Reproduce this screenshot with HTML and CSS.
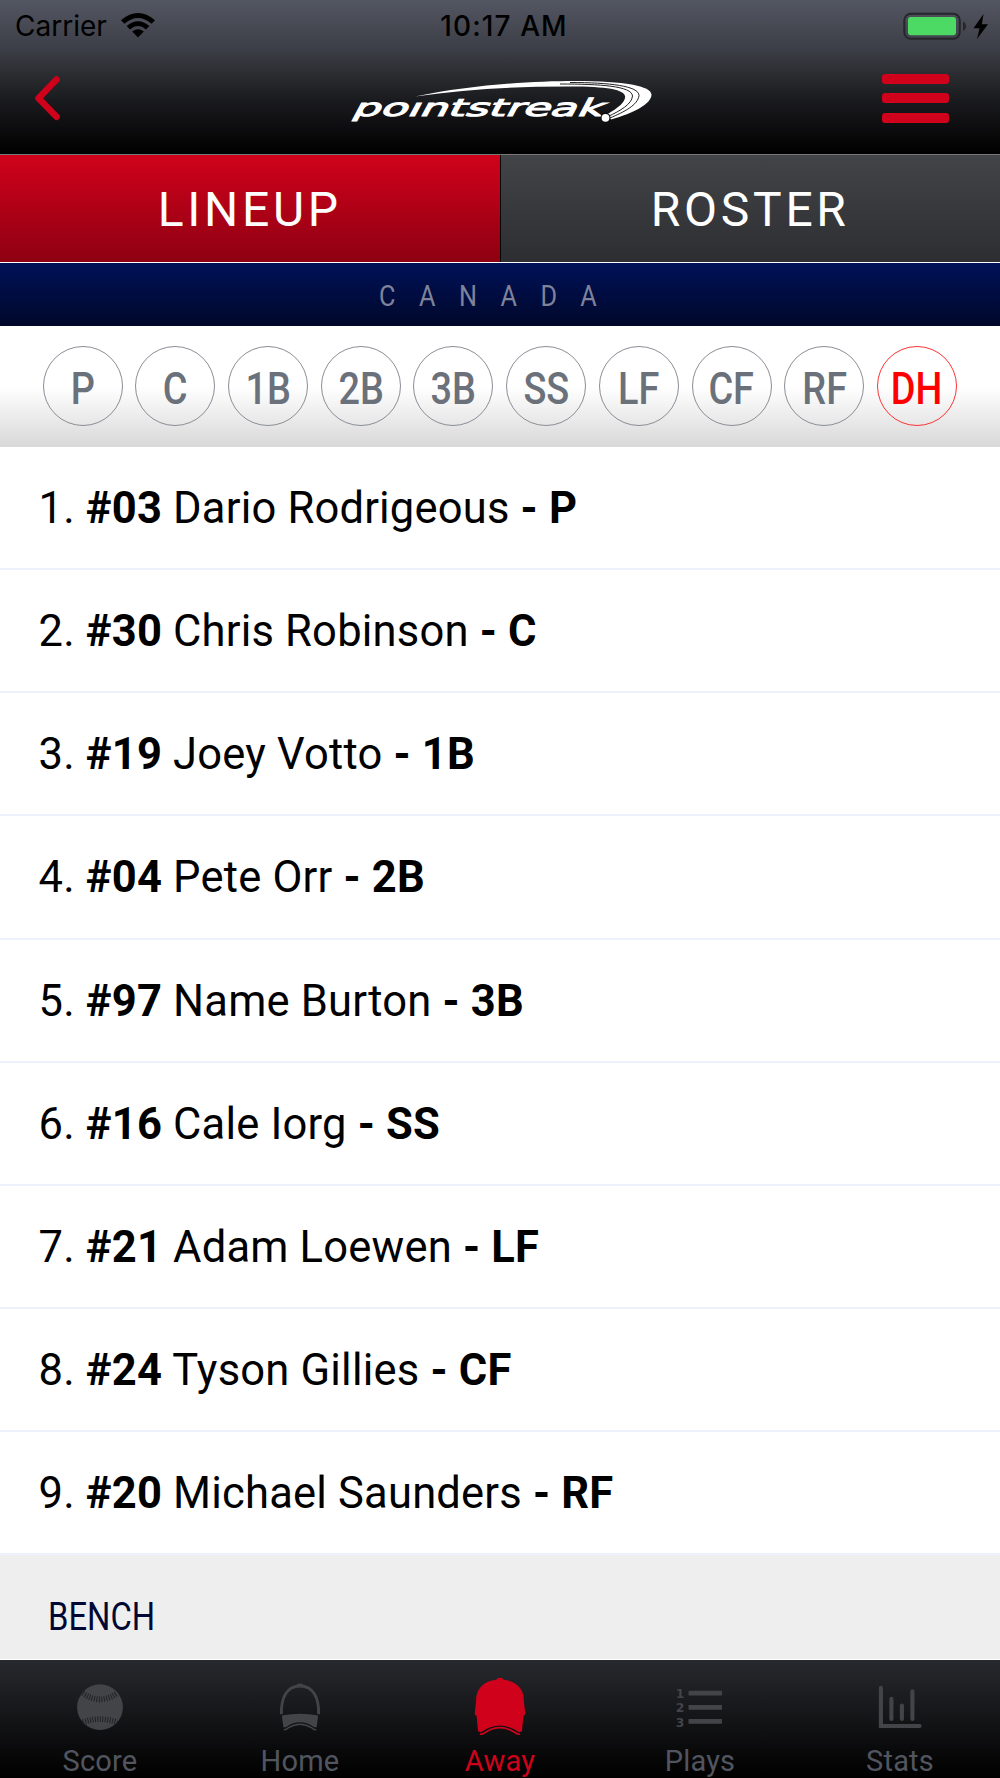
FILE: index.html
```html
<!DOCTYPE html>
<html lang="en">
<head>
    <meta charset="UTF-8">
    <meta name="viewport" content="width=device-width, initial-scale=1.0">
    <title>Lineup - Pointstreak</title>
    <link rel="stylesheet" href="styles.css">
</head>
<body>
    <div class="header">
        <div class="status-bar">
            <div class="status-left">
                <span class="carrier">Carrier</span>
                <svg class="wifi" width="34" height="25" viewBox="0 0 34 25">
                    <path d="M0 7.2Q17 -7.2 34 7.2L30.6 10.8Q17 -1 3.4 10.8Z"/>
                    <path d="M5.6 13Q17 3.4 28.4 13L25 16.4Q17 9.8 9 16.4Z"/>
                    <path d="M11.2 18.6Q17 14 22.8 18.6L17 24.6Z"/>
                </svg>
            </div>
            <span class="time">10:17 AM</span>
            <div class="status-right">
                <svg width="86" height="28" viewBox="0 0 86 28">
                    <rect x="1.3" y="1.8" width="55.5" height="25" rx="6.5" fill="none" stroke="#25272b" stroke-width="2"/>
                    <rect x="5" y="5" width="48" height="18.3" rx="3" fill="#4cd964"/>
                    <path d="M60 9.5Q63 11 63 14.2Q63 17.5 60 19Z" fill="#25272b"/>
                    <path d="M80.5 2L70.5 16.3H76.6L74 27L85 12.3H78.8Z" fill="#000"/>
                </svg>
            </div>
        </div>
        <div class="nav">
            <svg class="back" width="30" height="50" viewBox="0 0 30 50">
                <path d="M22.500 6.500L4.500 25.200L22.500 43.800"/>
            </svg>
            <svg class="logo" width="320" height="50" viewBox="340 75 320 50">
                <text transform="translate(351 116.300) skewX(-28)" x="0" y="0" textLength="250" lengthAdjust="spacingAndGlyphs">po&#305;ntstreak</text>
                <path class="swoosh" d="M415 96.500C470 85 530 81 575 81C625 81 652 86 651.500 95C651 104 634 113 611 119.500L607 114.500C620 107 626 101 625 96C623 88 600 86.500 565 86.500C515 86.500 465 89.500 415 96.500Z"/>
                <path class="stripe" d="M560 84C600 84 632 86 632.500 96C632 104 620 111 608 116.500"/>
                <path class="stripe" d="M570 82.500C610 82.500 639 86 639 95.500C638 105 624 112 610 118"/>
                <circle cx="605.500" cy="117.800" r="5" fill="#0c0d0e"/>
                <circle cx="605.500" cy="117.800" r="3.900" fill="#fff"/>
            </svg>
            <div class="menu"><i></i><i></i><i></i></div>
        </div>
    </div>

    <div class="tabs">
        <a class="tab active"><span>LINEUP</span></a>
        <a class="tab"><span>ROSTER</span></a>
    </div>

    <div class="team"><span>CANADA</span></div>

    <div class="positions">
        <div class="position"><span>P</span></div>
        <div class="position"><span>C</span></div>
        <div class="position"><span>1B</span></div>
        <div class="position"><span>2B</span></div>
        <div class="position"><span>3B</span></div>
        <div class="position"><span>SS</span></div>
        <div class="position"><span>LF</span></div>
        <div class="position"><span>CF</span></div>
        <div class="position"><span>RF</span></div>
        <div class="position selected"><span>DH</span></div>
    </div>

    <div class="lineup">
        <div class="player"><span>1. <b>#03</b> Dario Rodrigeous <b>- P</b></span></div>
        <div class="player"><span>2. <b>#30</b> Chris Robinson <b>- C</b></span></div>
        <div class="player"><span>3. <b>#19</b> Joey Votto <b>- 1B</b></span></div>
        <div class="player"><span>4. <b>#04</b> Pete Orr <b>- 2B</b></span></div>
        <div class="player"><span>5. <b>#97</b> Name Burton <b>- 3B</b></span></div>
        <div class="player"><span>6. <b>#16</b> Cale Iorg <b>- SS</b></span></div>
        <div class="player"><span>7. <b>#21</b> Adam Loewen <b>- LF</b></span></div>
        <div class="player"><span>8. <b>#24</b> Tyson Gillies <b>- CF</b></span></div>
        <div class="player"><span>9. <b>#20</b> Michael Saunders <b>- RF</b></span></div>
    </div>

    <div class="bench"><span>BENCH</span></div>

    <div class="tab-bar">
        <a class="item">
            <svg width="60" height="66" viewBox="0 0 60 66">
                <circle cx="30" cy="33.700" r="24" fill="#434448"/>
                <path class="stitch" d="M12 19Q30 32 48 19"/>
                <path class="stitch" d="M12 49.500Q30 43 48 49.500"/>
            </svg>
            <span>Score</span>
        </a>
        <a class="item">
            <svg width="60" height="66" viewBox="0 0 60 66">
                <path d="M10.500 41C10 24 16 11.500 30 11.500C44 11.500 50 24 49.500 41" fill="none" stroke="#434448" stroke-width="3"/>
                <ellipse cx="30" cy="10.800" rx="3.500" ry="1.800" fill="#434448"/>
                <path d="M11 42.500Q30 38.500 49 42.500L47.500 54.500L45.500 55Q30 44 14.500 55L12.500 54.500Z" fill="#434448"/>
                <path d="M13 57Q15 58 17.500 55.500Q30 47.500 42.500 55.500Q45 58 47 57" fill="none" stroke="#434448" stroke-width="1.500"/>
            </svg>
            <span>Home</span>
        </a>
        <a class="item current">
            <svg width="60" height="66" viewBox="0 0 60 66">
                <path d="M30 3Q33 3 34 5C50 7 55 17 55 27L56.500 41L54.500 43L53 59L50 60Q30 46 10 60L7 59L5.500 43L3.500 41L5 27C5 17 10 7 26 5Q27 3 30 3Z" fill="#d0021b"/>
                <path d="M9 61.800Q11 62.500 14 60.500Q30 50 46 60.500Q49 62.500 51 61.800" fill="none" stroke="#d0021b" stroke-width="1.800"/>
            </svg>
            <span>Away</span>
        </a>
        <a class="item">
            <svg width="60" height="66" viewBox="0 0 60 66">
                <text class="digit" x="4.500" y="24">1</text>
                <text class="digit" x="4.500" y="39">2</text>
                <text class="digit" x="4.500" y="54">3</text>
                <path d="M18 19H53M18 33.800H53M18 48.500H53" stroke="#434448" stroke-width="5"/>
            </svg>
            <span>Plays</span>
        </a>
        <a class="item">
            <svg width="60" height="66" viewBox="0 0 60 66">
                <path d="M10 13.500V53.500H50.500M21 25V46M32 32V46M43 17V46" fill="none" stroke="#434448" stroke-width="4.300" stroke-linecap="round"/>
            </svg>
            <span>Stats</span>
        </a>
    </div>
</body>
</html>
```
FILE: styles.css
```css
* {
    margin: 0;
    padding: 0;
    box-sizing: border-box;
}
body {
    width: 1000px;
    height: 1778px;
    overflow: hidden;
    background: white;
    color: black;
    font-family: Roboto, "Liberation Sans", sans-serif;
}
.header {
    height: 155px;
    background: linear-gradient(#535761 0, #3b3e46 50px, #292a2e 78px, #1a1b1e 100px, #000 154px);
    border-bottom: 1px solid #777;
}
.status-bar {
    height: 50px;
    padding: 1px 11px 0 15px;
    display: flex;
    align-items: center;
    font-family: Inter, sans-serif;
    font-size: 28px;
}
.status-left, .status-right {
    flex: 1;
    display: flex;
    align-items: center;
}
.status-left {
    gap: 14px;
}
.status-right {
    justify-content: flex-end;
}
.time {
    padding-left: 4px;
    font-weight: 500;
    letter-spacing: 1.1px;
}
.nav {
    height: 96px;
    padding: 0 51px 0 34px;
    display: flex;
    align-items: center;
    justify-content: space-between;
}
.back {
    margin-right: 54px;
}
.back path {
    fill: none;
    stroke: #d0021b;
    stroke-width: 6.5;
    stroke-linecap: round;
    stroke-linejoin: round;
}
.logo {
    margin-top: 4px;
}
.logo text {
    font-family: "DejaVu Sans", sans-serif;
    font-size: 24px;
    fill: #fff;
    stroke: #fff;
    stroke-width: 1;
}
.swoosh {
    fill: #fff;
}
.stripe {
    fill: none;
    stroke: #222;
    stroke-width: 1;
}
.menu {
    width: 67px;
    display: flex;
    flex-direction: column;
    gap: 9.5px;
}
.menu i {
    height: 10px;
    border-radius: 3px;
    background: #d0021b;
}
.tabs {
    height: 108px;
    display: flex;
    border-bottom: 1px solid #fff;
}
.tab {
    flex: 1;
    padding-top: 1px;
    display: flex;
    align-items: center;
    justify-content: center;
    background: linear-gradient(#434447, #2d2e31);
    color: white;
    font-size: 48px;
    letter-spacing: 3.7px;
}
.tab.active {
    background: linear-gradient(#d0021b, #8e0012);
    border-right: 1px solid #000;
}
/* condensed lettering */
.team span, .position span, .bench span {
    transform: scaleX(0.87);
}
.team {
    height: 63px;
    padding-top: 2px;
    display: flex;
    align-items: center;
    justify-content: center;
    background: linear-gradient(#001158, #00082a);
    color: #7f839a;
    font-size: 29px;
    letter-spacing: 27px;
}
.positions {
    height: 121px;
    padding: 0 43px 1px 42.5px;
    display: flex;
    align-items: center;
    justify-content: space-between;
    background: linear-gradient(#fff 50%, #d8d8d8);
}
.position {
    width: 80px;
    height: 80px;
    padding-top: 6px;
    border: 1px solid #8a8e96;
    border-radius: 50%;
    display: flex;
    align-items: center;
    justify-content: center;
    color: #6a717b;
    font-size: 43.5px;
    font-weight: 500;
}
.position.selected {
    color: #f00;
    border-color: #f33;
}
.player {
    height: 123.15px;
    padding: 2px 0 0 38.5px;
    display: flex;
    align-items: center;
    border-bottom: 2px solid #ecf1fb;
    font-size: 43.5px;
    letter-spacing: 0.2px;
    white-space: pre;
}
.bench {
    height: 104.65px;
    padding: 20px 0 0 48px;
    display: flex;
    align-items: center;
    background: #eee;
    border-bottom: 1px solid #fff;
    color: #000833;
    font-size: 39px;
}
.bench span {
    transform: scaleX(0.84);
    transform-origin: left;
}
.tab-bar {
    height: 118px;
    display: flex;
    background: linear-gradient(#28292e, #000);
}
.item {
    flex: 1;
    padding-top: 15px;
    display: flex;
    flex-direction: column;
    align-items: center;
    color: #51555f;
    font-size: 29px;
    letter-spacing: 0.2px;
}
.item span {
    line-height: 34px;
    margin-top: 6px;
}
.item.current {
    color: #d0021b;
}
.stitch {
    fill: none;
    stroke: #1f2023;
    stroke-width: 6;
    stroke-dasharray: 1 1.6;
}
.digit {
    font-family: "DejaVu Sans", sans-serif;
    font-size: 13px;
    font-weight: bold;
    fill: #434448;
}
```
